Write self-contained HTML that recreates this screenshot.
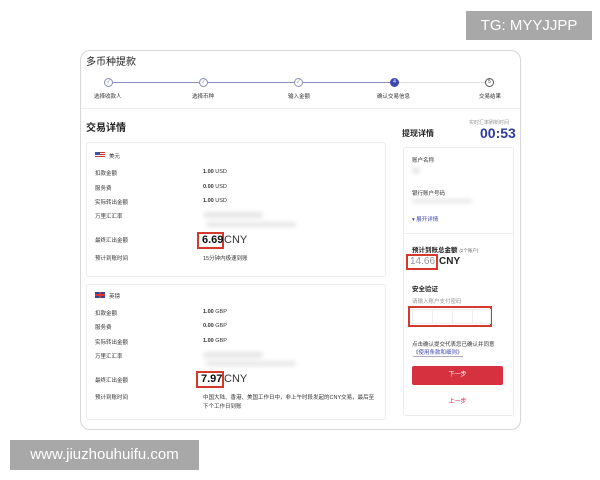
<!DOCTYPE html>
<html><head><meta charset="utf-8"><style>
*{margin:0;padding:0;box-sizing:border-box}
body{width:600px;height:480px;background:#fff;position:relative;overflow:hidden;font-family:"Liberation Sans","Noto Sans CJK SC",sans-serif;color:#333}
.a{position:absolute;white-space:nowrap}
.card{position:absolute;left:80px;top:50px;width:441px;height:380px;border:1px solid #d8d8d8;border-radius:10px;background:#fff}
.sm{font-size:5.5px;color:#333}
.box{position:absolute;border:1px solid #ececec;border-radius:3px;background:#fff}
.blur{position:absolute;background:#e6e6e6;border-radius:4px;filter:blur(2px)}
.c{position:absolute;width:9px;height:9px;border-radius:50%;border:1px solid #8a8fb8;background:#fff;font-size:5px;text-align:center;line-height:7px;color:#6a70a8}
.red{position:absolute;border:2px solid #d33a2c}
</style></head><body>
<div class="a" style="left:466px;top:11px;width:126px;height:29px;background:#a8a8a8;color:#fff;font-size:15px;line-height:29px;text-align:center">TG: MYYJJPP</div>
<div class="a" style="left:10px;top:440px;width:189px;height:30px;background:#a8a8a8;color:#fff;font-size:15px;line-height:30px;text-align:center">www.jiuzhouhuifu.com</div>

<div class="card"></div>
<div class="a" style="left:86px;top:53px;font-size:10px;color:#222">多币种提款</div>
<div class="a" style="left:109px;top:82px;width:286px;height:1px;background:#8a8fb8"></div>
<div class="a" style="left:395px;top:82px;width:95px;height:1px;background:#ddd"></div>
<div class="c" style="left:104px;top:78px">✓</div>
<div class="c" style="left:199px;top:78px">✓</div>
<div class="c" style="left:294px;top:78px">✓</div>
<div class="c" style="left:390px;top:78px;background:#3b46b0;border-color:#3b46b0;color:#fff">4</div>
<div class="c" style="left:485px;top:78px;border-color:#555;color:#333">5</div>
<div class="a sm" style="left:94px;top:92px">选择收款人</div>
<div class="a sm" style="left:192px;top:92px">选择币种</div>
<div class="a sm" style="left:288px;top:92px">输入金额</div>
<div class="a sm" style="left:377px;top:92px">确认交易信息</div>
<div class="a sm" style="left:479px;top:92px">交易结果</div>
<div class="a" style="left:81px;top:108px;width:439px;height:1px;background:#eee"></div>

<div class="a" style="left:86px;top:119px;font-size:10px;font-weight:bold;color:#222">交易详情</div>
<div class="a" style="left:469px;top:119px;font-size:5px;color:#999">实时汇率刷新时间</div>
<div class="a" style="left:402px;top:128px;font-size:8px;font-weight:bold;color:#222">提现详情</div>
<div class="a" style="left:480px;top:125px;font-size:14px;font-weight:bold;color:#2d3a9a">00:53</div>

<div class="box" style="left:86px;top:142px;width:300px;height:135px"></div>
<div class="a" style="left:95px;top:152px;width:10px;height:6px;background:repeating-linear-gradient(#c33 0 1px,#fff 1px 2px)"></div>
<div class="a" style="left:95px;top:152px;width:5px;height:3px;background:#35a"></div>
<div class="a sm" style="left:109px;top:152px">美元</div>
<div class="a sm" style="left:95px;top:169px">扣款金额</div><div class="a sm" style="left:203px;top:169px"><b>1.00</b> USD</div>
<div class="a sm" style="left:95px;top:184px">服务费</div><div class="a sm" style="left:203px;top:184px"><b>0.00</b> USD</div>
<div class="a sm" style="left:95px;top:198px">实际转出金额</div><div class="a sm" style="left:203px;top:198px"><b>1.00</b> USD</div>
<div class="a sm" style="left:95px;top:212px">万里汇汇率</div>
<div class="blur" style="left:203px;top:212px;width:60px;height:6px"></div>
<div class="blur" style="left:206px;top:222px;width:90px;height:5px"></div>
<div class="a sm" style="left:95px;top:236px">最终汇出金额</div>
<div class="red" style="left:197px;top:232px;width:27px;height:17px"></div>
<div class="a" style="left:202px;top:234px;font-size:11px;font-weight:bold;color:#111">6.69</div>
<div class="a" style="left:224px;top:234px;font-size:11px;color:#333">CNY</div>
<div class="a sm" style="left:95px;top:254px">预计到账时间</div><div class="a sm" style="left:203px;top:254px">15分钟内极速到账</div>

<div class="box" style="left:86px;top:284px;width:300px;height:136px"></div>
<div class="a" style="left:95px;top:292px;width:10px;height:6px;background:#2a4a9a"></div>
<div class="a" style="left:99px;top:292px;width:2px;height:6px;background:#d33"></div>
<div class="a" style="left:95px;top:294px;width:10px;height:2px;background:#d33"></div>
<div class="a sm" style="left:109px;top:292px">英镑</div>
<div class="a sm" style="left:95px;top:309px">扣款金额</div><div class="a sm" style="left:203px;top:309px"><b>1.00</b> GBP</div>
<div class="a sm" style="left:95px;top:323px">服务费</div><div class="a sm" style="left:203px;top:323px"><b>0.00</b> GBP</div>
<div class="a sm" style="left:95px;top:338px">实际转出金额</div><div class="a sm" style="left:203px;top:338px"><b>1.00</b> GBP</div>
<div class="a sm" style="left:95px;top:352px">万里汇汇率</div>
<div class="blur" style="left:203px;top:352px;width:60px;height:6px"></div>
<div class="blur" style="left:206px;top:361px;width:90px;height:5px"></div>
<div class="a sm" style="left:95px;top:376px">最终汇出金额</div>
<div class="red" style="left:196px;top:371px;width:28px;height:17px"></div>
<div class="a" style="left:201px;top:373px;font-size:11px;font-weight:bold;color:#111">7.97</div>
<div class="a" style="left:224px;top:373px;font-size:11px;color:#333">CNY</div>
<div class="a sm" style="left:95px;top:393px">预计到账时间</div>
<div class="a sm" style="left:203px;top:393px">中国大陆、香港、美国工作日中，非上午时段发起的CNY交易，最后至</div>
<div class="a sm" style="left:203px;top:402px">下个工作日到账</div>

<div class="box" style="left:403px;top:147px;width:111px;height:269px"></div>
<div class="a sm" style="left:412px;top:156px">账户名称</div>
<div class="blur" style="left:412px;top:167px;width:8px;height:7px"></div>
<div class="a sm" style="left:412px;top:189px">银行账户号码</div>
<div class="blur" style="left:412px;top:199px;width:60px;height:4px"></div>
<div class="a" style="left:412px;top:215px;font-size:5.5px;color:#3b46b0">▾ 展开详情</div>
<div class="a" style="left:403px;top:233px;width:111px;height:1px;background:#eee"></div>
<div class="a" style="left:412px;top:244px;font-size:6.5px;font-weight:bold;color:#222">预计到账总金额 <span style="font-size:4.5px;font-weight:normal;color:#666">(2个账户)</span></div>
<div class="red" style="left:406px;top:254px;width:32px;height:16px"></div>
<div class="a" style="left:410px;top:256px;font-size:10px;color:#999">14.66</div>
<div class="a" style="left:439px;top:256px;font-size:10px;font-weight:bold;color:#222">CNY</div>
<div class="a" style="left:412px;top:283px;font-size:6.5px;font-weight:bold;color:#222">安全验证</div>
<div class="a" style="left:412px;top:297px;font-size:5.5px;color:#999">请输入账户支付密码</div>
<div class="red" style="left:408px;top:306px;width:84px;height:21px"></div>
<div class="a" style="left:412px;top:309px;width:79px;height:15px;border:1px solid #eee;background:linear-gradient(90deg,transparent 19px,#eee 19px 20px,transparent 20px 39px,#eee 39px 40px,transparent 40px 59px,#eee 59px 60px,transparent 60px)"></div>
<div class="a sm" style="left:412px;top:340px">点击确认提交代表您已确认并同意</div>
<div class="a" style="left:413px;top:348px;font-size:5.5px;color:#3b46b0;border-bottom:1px solid #aab">《使用条款和细则》</div>
<div class="a" style="left:412px;top:366px;width:91px;height:19px;background:#d6313f;border-radius:2px;color:#fff;font-size:6px;text-align:center;line-height:19px">下一步</div>
<div class="a" style="left:412px;top:396px;width:91px;text-align:center;font-size:6px;color:#d6313f">上一步</div>
</body></html>
